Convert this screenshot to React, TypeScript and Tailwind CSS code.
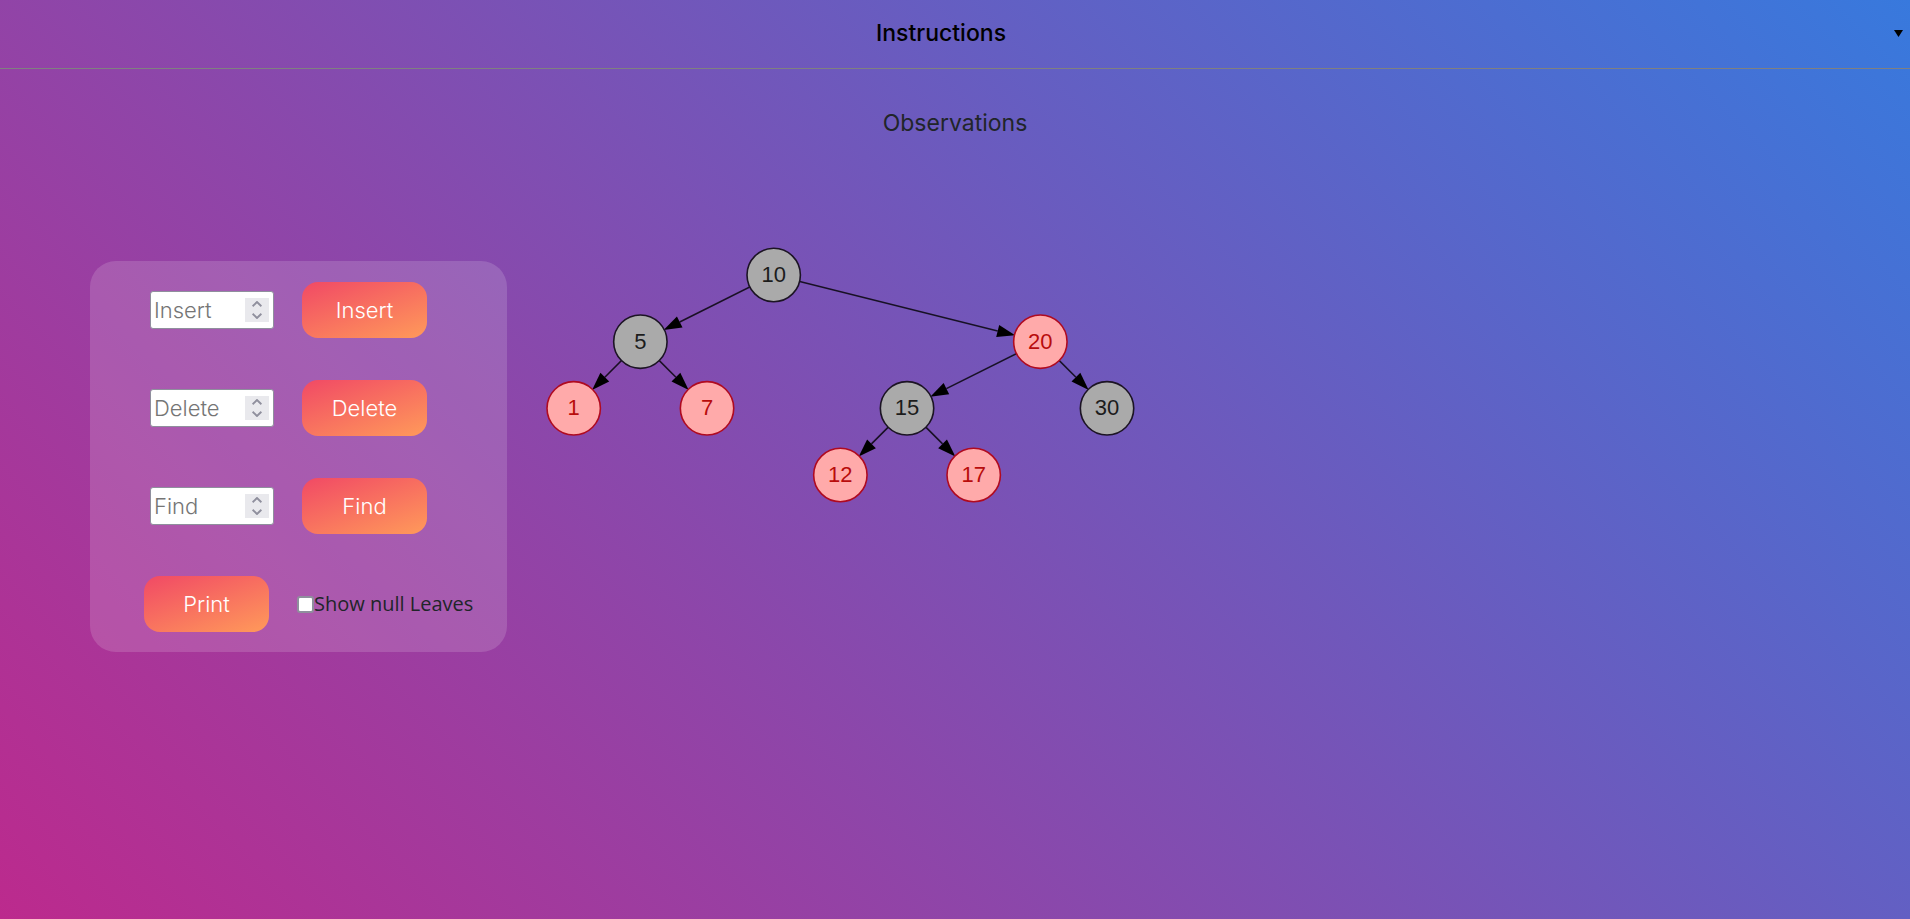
import { useState } from "react";

type TreeNode = { value: number; col: number; row: number; red: boolean };

const nodes: TreeNode[] = [
  { value: 10, col: 3, row: 0, red: false },
  { value: 5, col: 1, row: 1, red: false },
  { value: 20, col: 7, row: 1, red: true },
  { value: 1, col: 0, row: 2, red: true },
  { value: 7, col: 2, row: 2, red: true },
  { value: 15, col: 5, row: 2, red: false },
  { value: 30, col: 8, row: 2, red: false },
  { value: 12, col: 4, row: 3, red: true },
  { value: 17, col: 6, row: 3, red: true },
];

const edges: [number, number][] = [
  [10, 5],
  [10, 20],
  [5, 1],
  [5, 7],
  [20, 15],
  [20, 30],
  [15, 12],
  [15, 17],
];

const STEP = 200 / 3;
const RADIUS = 26.7;

const centre = (n: TreeNode) => ({ x: 33.7 + n.col * STEP, y: 35 + n.row * STEP });
const byValue = (v: number) => nodes.find((n) => n.value === v)!;

function Edge({ from, to }: { from: number; to: number }) {
  const a = centre(byValue(from));
  const b = centre(byValue(to));
  const len = Math.hypot(b.x - a.x, b.y - a.y);
  const ux = (b.x - a.x) / len;
  const uy = (b.y - a.y) / len;
  const tip = { x: b.x - ux * (RADIUS - 0.7), y: b.y - uy * (RADIUS - 0.7) };
  const base = { x: tip.x - ux * 18, y: tip.y - uy * 18 };
  const points = [
    `${tip.x},${tip.y}`,
    `${base.x - uy * 6.2},${base.y + ux * 6.2}`,
    `${base.x + uy * 6.2},${base.y - ux * 6.2}`,
  ].join(" ");
  return (
    <g>
      <line x1={a.x} y1={a.y} x2={base.x} y2={base.y} stroke="#000" strokeOpacity="0.8" strokeWidth="1.6" />
      <polygon points={points} fill="#000" />
    </g>
  );
}

function Tree() {
  return (
    <svg
      viewBox="0 0 620 270"
      className="w-[620px] shrink-0 font-['Liberation_Sans',Arial,sans-serif] text-[22px]"
      role="img"
      aria-label="Red-black tree"
    >
      {edges.map(([from, to]) => (
        <Edge key={`${from}-${to}`} from={from} to={to} />
      ))}
      {nodes.map((n) => {
        const { x, y } = centre(n);
        return (
          <g key={n.value}>
            <circle
              cx={x}
              cy={y}
              r={RADIUS}
              fill={n.red ? "#ffaaaa" : "#aaaaaa"}
              stroke={n.red ? "#b00a20" : "#1c1424"}
              strokeWidth="1.6"
            />
            <text x={x} y={y + 7} textAnchor="middle" fill={n.red ? "#b80c0c" : "#1c1c1c"}>
              {n.value}
            </text>
          </g>
        );
      })}
    </svg>
  );
}

const buttonClass =
  "h-14 w-[125px] rounded-2xl bg-[linear-gradient(160deg,#f14965,#ff9a5a)] text-[22px] leading-8 font-light text-white";

function NumberRow({ label }: { label: string }) {
  const [value, setValue] = useState("");
  const step = (by: number) => setValue(String((Number(value) || 0) + by));
  return (
    <form className="flex items-center gap-7 pl-[60px]" onSubmit={(e) => e.preventDefault()}>
      <div className="flex h-[38px] w-[124px] items-center rounded-[3px] border border-[#8f8f9d] bg-white pr-1">
        <input
          type="number"
          aria-label={label}
          placeholder={label}
          value={value}
          onChange={(e) => setValue(e.target.value)}
          className="w-full min-w-0 flex-1 bg-transparent pl-[3px] text-[22px] leading-8 font-light text-gray-900 outline-none [appearance:textfield] placeholder:text-[#757575]"
        />
        <div className="flex size-6 shrink-0 flex-col bg-[#e9e9ed] text-[#8f8f9d]">
          <button type="button" aria-label={`Increase ${label}`} className="flex h-3 items-center justify-center" onClick={() => step(1)}>
            <svg width="10" height="6" viewBox="0 0 10 6" fill="none" stroke="currentColor" strokeWidth="1.9">
              <path d="M0.6 5.2 L5 1 L9.4 5.2" />
            </svg>
          </button>
          <button type="button" aria-label={`Decrease ${label}`} className="flex h-3 items-center justify-center" onClick={() => step(-1)}>
            <svg width="10" height="6" viewBox="0 0 10 6" fill="none" stroke="currentColor" strokeWidth="1.9">
              <path d="M0.6 0.8 L5 5 L9.4 0.8" />
            </svg>
          </button>
        </div>
      </div>
      <button type="submit" className={buttonClass}>
        {label}
      </button>
    </form>
  );
}

export default function App() {
  return (
    <div className="min-h-screen bg-[linear-gradient(45deg,#bc2a8d,#3879dd)] font-['Inter','Open_Sans',sans-serif] text-[#212529]">
      <button
        type="button"
        className="flex w-full items-center border-b border-[gray] pt-[17px] pb-[19px] text-[23px] leading-8 font-medium text-black"
      >
        <span className="flex-1 text-center">Instructions</span>
        <span className="flex w-7 pl-3">
          <svg width="9" height="7" viewBox="0 0 9 7" fill="currentColor">
            <path d="M0 0H9L4.5 7Z" />
          </svg>
        </span>
      </button>
      <main>
        <h2 className="pt-[38px] text-center text-[23px] leading-8 font-normal">Observations</h2>
        <div className="flex items-start gap-[33px] pt-[101px] pl-[90px]">
          <section className="mt-[21px] flex w-[417px] shrink-0 flex-col gap-[42px] rounded-[26px] bg-white/15 pt-[21px] pb-5">
            <NumberRow label="Insert" />
            <NumberRow label="Delete" />
            <NumberRow label="Find" />
            <div className="flex items-center gap-7 pl-[54px]">
              <button type="button" className={buttonClass}>
                Print
              </button>
              <label className="flex items-center font-['Open_Sans','Noto_Sans',sans-serif] text-[20px] leading-8 whitespace-nowrap">
                <input
                  type="checkbox"
                  className="size-[17px] appearance-none rounded-[3px] border-2 border-[#8f8f9d] bg-white checked:bg-[#0060df]"
                />
                Show null Leaves
              </label>
            </div>
          </section>
          <Tree />
        </div>
      </main>
    </div>
  );
}
